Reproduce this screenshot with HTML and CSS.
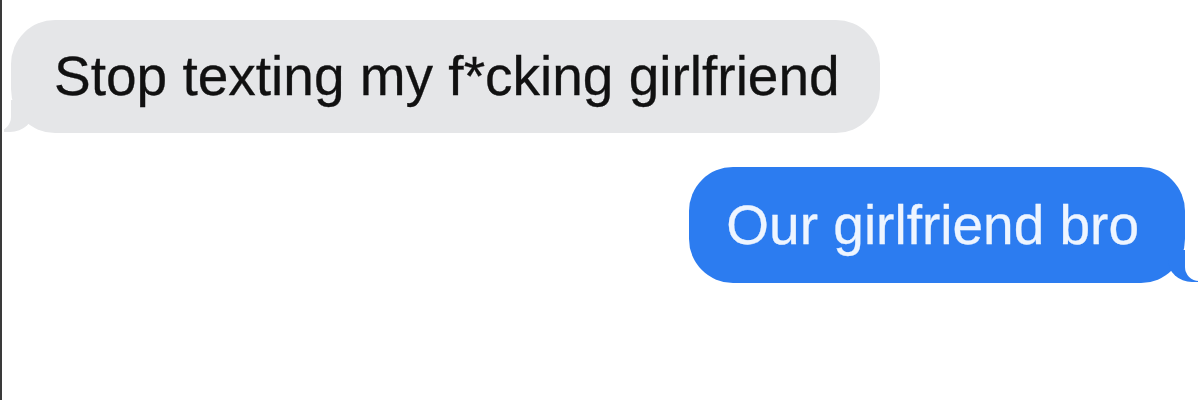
FILE: index.html
```html
<!DOCTYPE html>
<html lang="en">
<head>
<meta charset="utf-8">
<title>Messages</title>
<link rel="stylesheet" href="styles.css">
</head>
<body>
<main class="thread">
  <div class="bubble them">Stop texting my f*cking girlfriend</div>
  <div class="bubble me">Our girlfriend bro</div>
</main>
</body>
</html>
```
FILE: styles.css
```css
html, body {
  margin: 0;
  padding: 0;
  background: #ffffff;
}
body {
  width: 1200px;
  height: 400px;
  overflow: hidden;
  box-sizing: border-box;
  border-left: 2px solid #3a3a3a;
  font-family: "Liberation Sans", Arial, sans-serif;
}
.thread {
  display: flex;
  flex-direction: column;
  padding: 20px 15px 0 9px;
}
.bubble {
  position: relative;
  font-size: 55px;
  line-height: 113px;
  height: 113px;
  border-radius: 44px;
  white-space: nowrap;
  -webkit-text-stroke: 0.3px currentColor;
}
.them {
  align-self: flex-start;
  background: #e5e6e8;
  color: #111111;
  padding: 0 40px 0 43px;
}
.me {
  align-self: flex-end;
  margin-top: 34px;
  height: 116px;
  line-height: 116px;
  background: #2c7cf0;
  color: #eef5ff;
  padding: 0 46px 0 37px;
}
.bubble::before,
.bubble::after {
  content: "";
  position: absolute;
  bottom: -1px;
  height: 32px;
}
.them::before {
  left: -7px;
  border-left: 30px solid #e5e6e8;
  border-bottom-right-radius: 24px 22px;
  transform: translateY(-2px);
}
.them::after {
  left: -17px;
  width: 17px;
  background: #ffffff;
  border-bottom-right-radius: 14px;
  transform: translateY(-3px);
}
.me::before {
  right: -13px;
  border-right: 30px solid #2c7cf0;
  border-bottom-left-radius: 24px 22px;
  transform: translateY(-2px);
}
.me::after {
  right: -23px;
  width: 23px;
  background: #ffffff;
  border-bottom-left-radius: 14px;
  transform: translateY(-3px);
}
```
